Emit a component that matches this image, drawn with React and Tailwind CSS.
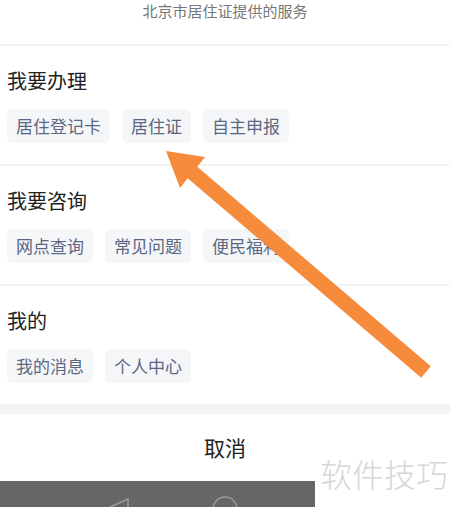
import React from "react";

const sections = [
  { title: "我要办理", items: ["居住登记卡", "居住证", "自主申报"] },
  { title: "我要咨询", items: ["网点查询", "常见问题", "便民福利"] },
  { title: "我的", items: ["我的消息", "个人中心"] },
];

export default function App() {
  return (
    <div
      className="relative w-[450px] h-[507px] overflow-hidden bg-white flex flex-col"
      style={{ fontFamily: '"Noto Sans CJK SC", "Noto Sans", sans-serif' }}
    >
      {/* header */}
      <div className="h-[44px] flex items-start justify-center pt-[1px]">
        <span className="text-[15px] leading-[20px] text-[#777]">北京市居住证提供的服务</span>
      </div>

      {sections.map((s) => (
        <div key={s.title}>
          <div className="h-[2px] bg-[#f3f3f3]" />
          <div className="px-[7px] pt-[22px] pb-[21px]">
            <h2 className="text-[20px] leading-[26px] text-[#222]">{s.title}</h2>
            <div className="flex gap-[12px] mt-[15px]">
              {s.items.map((item) => (
                <div
                  key={item}
                  className="h-[34px] px-[9px] flex items-center rounded-[6px] bg-[#f5f6f8] text-[17px] text-[#5b6884]"
                >
                  {item}
                </div>
              ))}
            </div>
          </div>
        </div>
      ))}

      {/* grey band */}
      <div className="h-[10px] bg-[#f4f4f4]" />

      {/* cancel */}
      <div className="h-[68px] flex items-center justify-center">
        <span className="text-[21px] text-[#222]">取消</span>
      </div>

      {/* system nav bar */}
      <div className="w-[315px] h-[26px] bg-[#666666] shrink-0">
        <svg width="315" height="26" viewBox="0 0 315 26">
          <path d="M110 26 L128 18 L128 26" fill="none" stroke="#9a9a9a" strokeWidth="1.5" />
          <circle cx="225" cy="28" r="12" fill="none" stroke="#9a9a9a" strokeWidth="1.5" />
        </svg>
      </div>

      {/* watermark */}
      <div className="absolute left-[320px] top-[451px] text-[32px] leading-[44px] font-light text-[#d6d6d6]">
        软件技巧
      </div>

      {/* orange arrow */}
      <svg className="absolute left-0 top-0 pointer-events-none" width="450" height="507" viewBox="0 0 450 507">
        <polygon
          points="166,151 205,157 197.3,166.7 430.8,366.2 421.2,377.8 187.7,178.3 180,188"
          fill="#f68b3c"
        />
      </svg>
    </div>
  );
}
